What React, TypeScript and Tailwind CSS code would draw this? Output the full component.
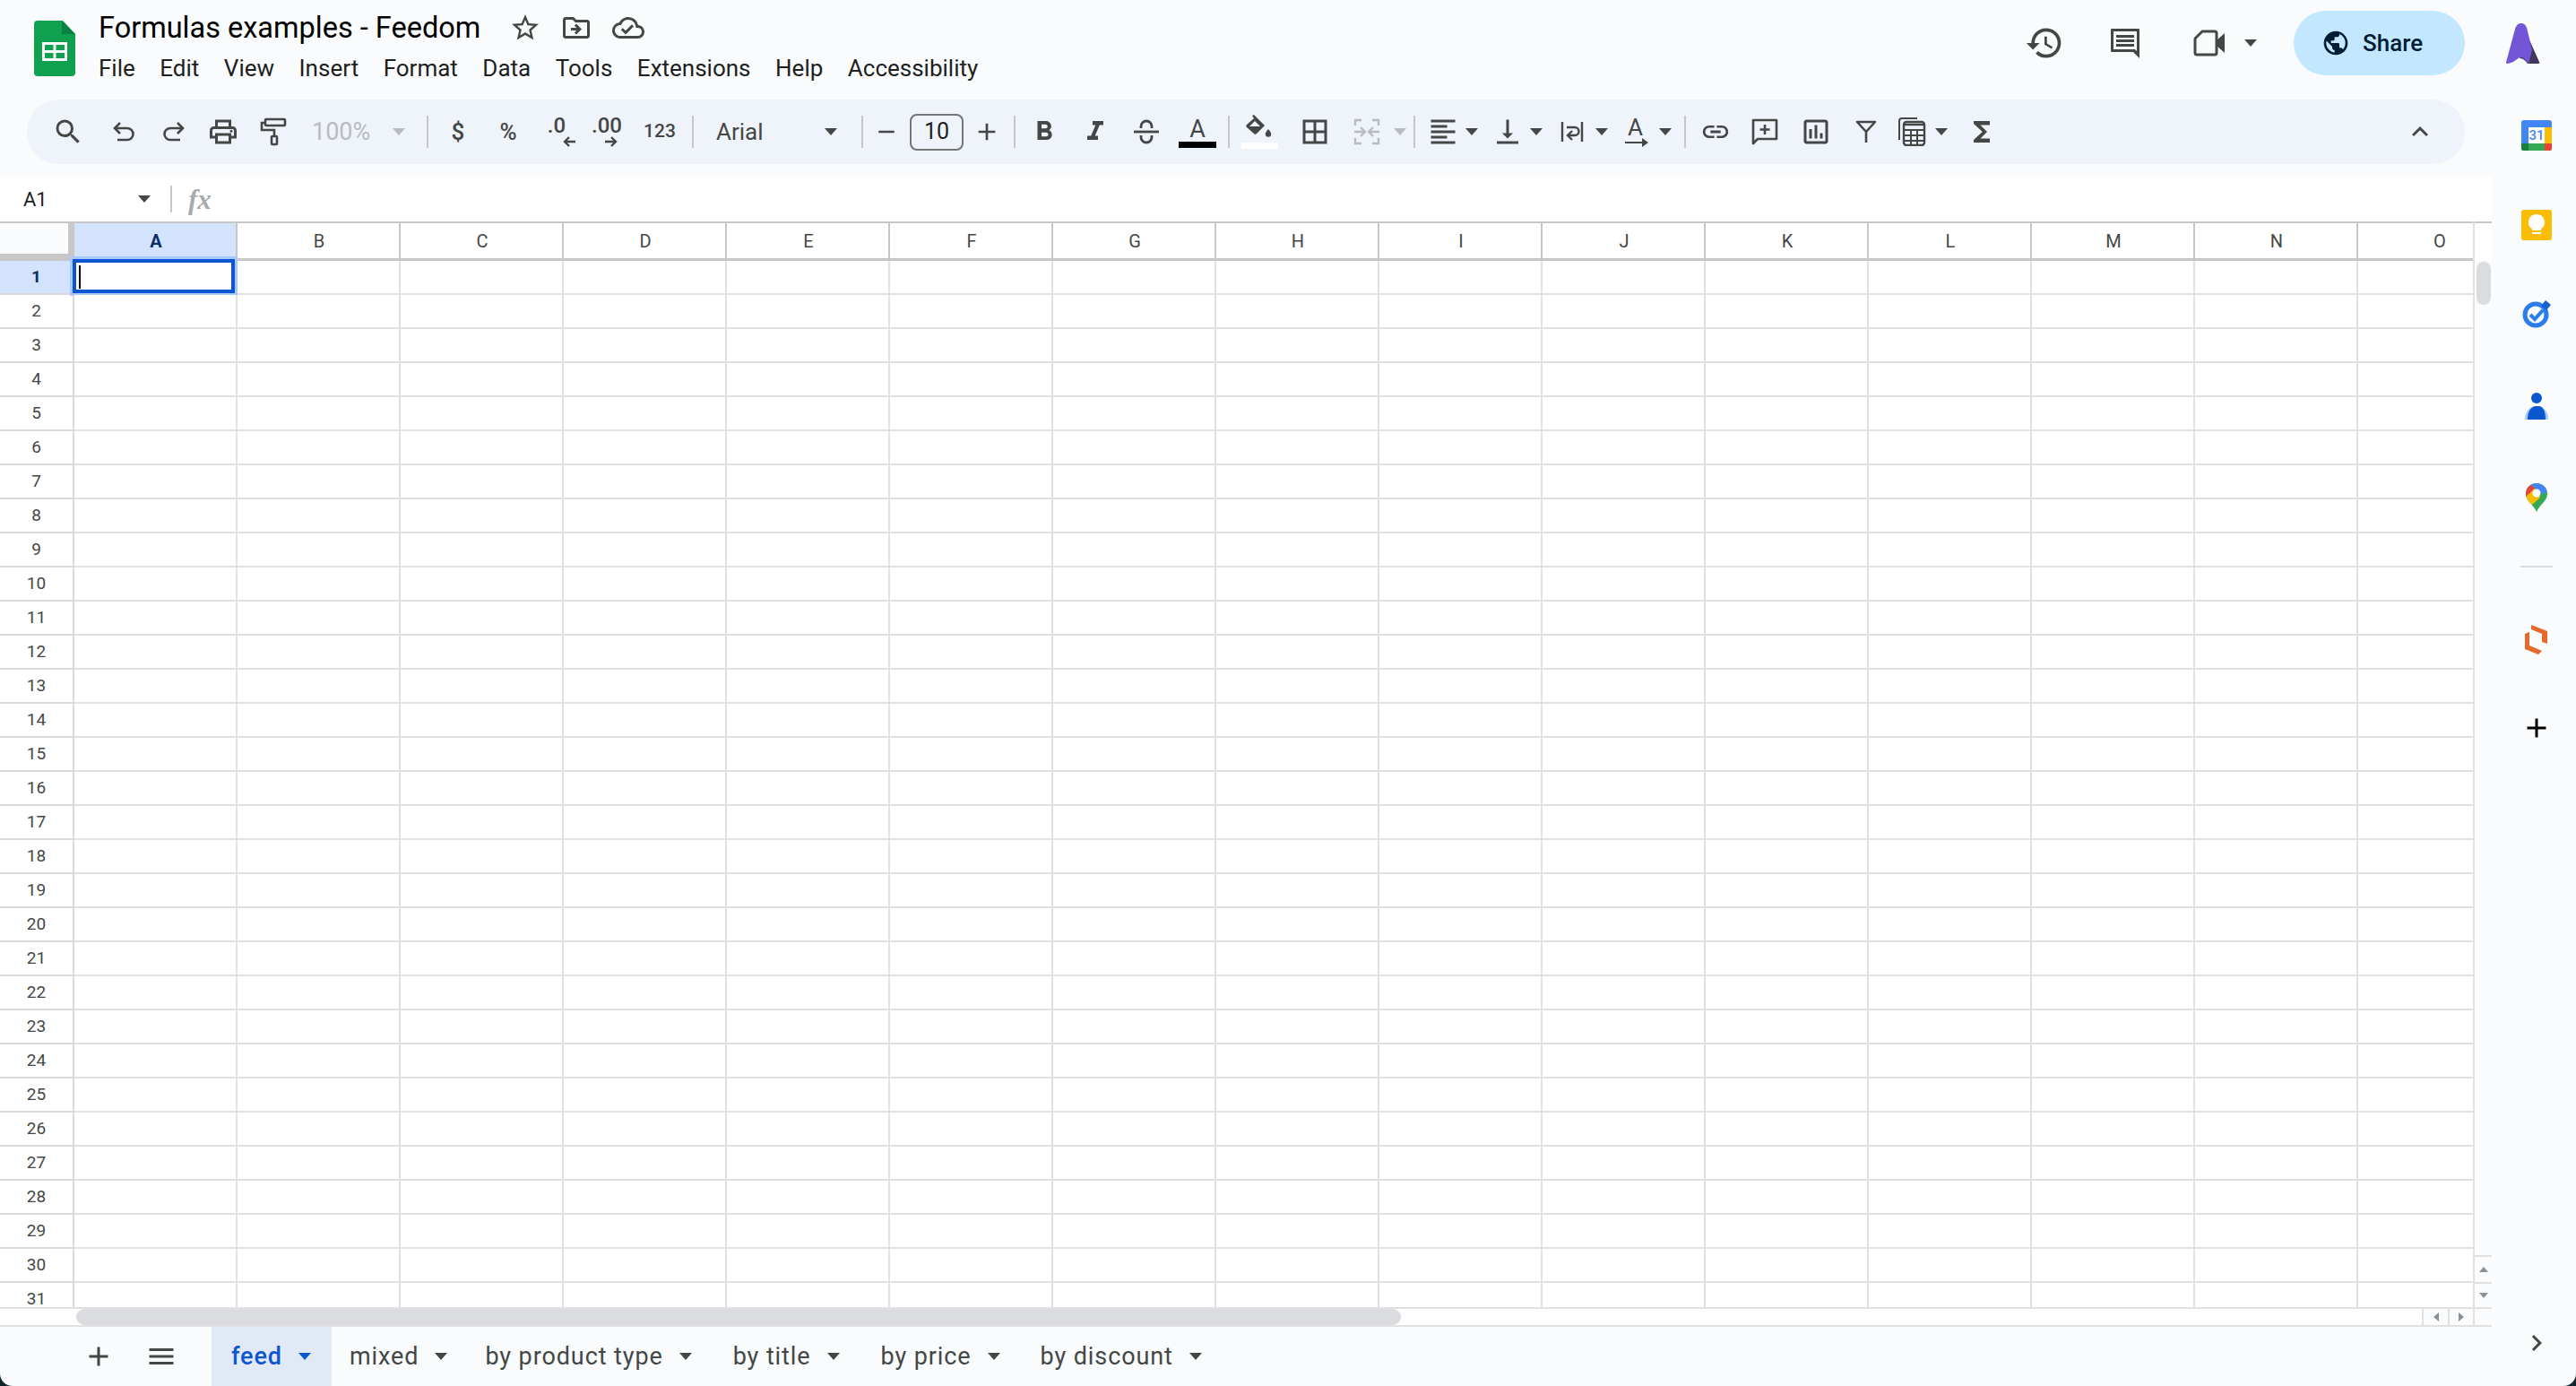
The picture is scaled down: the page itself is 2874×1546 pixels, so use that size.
import React from 'react';
import {
  MdSearch, MdOutlinePrint, MdFormatBold, MdFormatItalic,
  MdBorderAll, MdFormatAlignLeft, MdVerticalAlignBottom, MdLink,
  MdOutlineInsertChart, MdFunctions, MdHistory, MdPublic, MdStarBorder, MdOutlineDriveFileMove,
  MdOutlineCloudDone, MdAdd, MdMenu, MdExpandLess, MdChevronRight, MdRemove,
} from 'react-icons/md';

const COLS = ['A', 'B', 'C', 'D', 'E', 'F', 'G', 'H', 'I', 'J', 'K', 'L', 'M', 'N', 'O'];
const ROWS = Array.from({ length: 31 }, (_, i) => i + 1);
const MENU = ['File', 'Edit', 'View', 'Insert', 'Format', 'Data', 'Tools', 'Extensions', 'Help', 'Accessibility'];
const TABS = [
  { name: 'mixed', cls: 'pl-[20px] pr-[21px]' },
  { name: 'by product type', cls: 'pl-[21px] pr-[24px]' },
  { name: 'by title', cls: 'pl-[22px] pr-[24px]' },
  { name: 'by price', cls: 'pl-[22px] pr-[23px]' },
  { name: 'by discount', cls: 'pl-[22px] pr-[21px]' },
];

const Caret: React.FC<{ className?: string }> = ({ className = 'text-[#444746]' }) => (
  <svg width="14" height="8" viewBox="0 0 14 8" className={`shrink-0 ${className}`}>
    <path d="M0 0h14L7 8z" fill="currentColor" />
  </svg>
);

const Sep: React.FC<{ className?: string }> = ({ className = '' }) => (
  <div className={`h-[36px] w-[2px] shrink-0 bg-[#c7c7c7] ${className}`} />
);

const Btn: React.FC<{ className: string; children: React.ReactNode }> = ({ className, children }) => (
  <div className={`flex h-full shrink-0 items-center justify-center text-[#444746] ${className}`}>{children}</div>
);

const CaretBox: React.FC<{ className?: string; muted?: boolean }> = ({ className = '', muted }) => (
  <div className={`flex h-full w-[14px] shrink-0 items-center justify-center ${className}`}>
    <Caret className={muted ? 'text-[#b9bcbf]' : 'text-[#444746]'} />
  </div>
);

const UndoIcon = () => (
  <svg width="26" height="24" viewBox="0 0 26 24" fill="none" stroke="currentColor" strokeWidth="2.6">
    <path d="M9 2L3 8l6 6" />
    <path d="M3 8h14a6.500 6.500 0 0 1 0 13H6" />
  </svg>
);

const RedoIcon = () => (
  <svg width="26" height="24" viewBox="0 0 26 24" fill="none" stroke="currentColor" strokeWidth="2.6">
    <path d="M17 2l6 6-6 6" />
    <path d="M23 8H9a6.500 6.500 0 0 0 0 13h11" />
  </svg>
);

const PaintIcon = () => (
  <svg width="34" height="34" viewBox="0 0 34 34" fill="none" stroke="currentColor" strokeWidth="2.6">
    <rect x="7" y="3" width="22" height="7" rx="1" />
    <path d="M7 7H3v8h14v7" />
    <rect x="14" y="22" width="6" height="9" rx="1" />
  </svg>
);

const StrikeIcon = () => (
  <svg width="32" height="32" viewBox="0 0 32 32" fill="none" stroke="currentColor" strokeWidth="2.8">
    <path d="M10 12V10a6 6 0 0 1 12 0v2" />
    <path d="M2 16h28" />
    <path d="M10 20v2a6 6 0 0 0 12 0v-2" />
  </svg>
);

const FillIcon = () => (
  <svg width="34" height="30" viewBox="0 0 34 30" fill="currentColor">
    <path d="M9 1l2-1 12 12-9 9a2 2 0 0 1-3 0L3 14a2 2 0 0 1 0-3l8-7zm3 6l-6 6 h12z" fillRule="evenodd" />
    <path d="M27 16s3.2 3.4 3.2 5.6a3.2 3.2 0 0 1-6.4 0C23.800 19.400 27 16 27 16z" />
  </svg>
);

const MergeIcon = () => (
  <svg width="32" height="30" viewBox="0 0 32 30" fill="none" stroke="currentColor" strokeWidth="2.4">
    <path d="M10 2H3v6M10 28H3v-6M22 2h7v6M22 28h7v-6" />
    <path d="M2 15h11M9 10l5 5-5 5M30 15H19M23 10l-5 5 5 5" />
  </svg>
);

const WrapIcon = () => (
  <svg width="26" height="26" viewBox="0 0 26 26" fill="none" stroke="currentColor" strokeWidth="2.4">
    <path d="M2 2v22M24 2v22" />
    <path d="M7 8h9a4 4 0 0 1 0 9h-7M13 12l-5 5 5 5" />
  </svg>
);

const RotateBlock = () => (
  <div className="flex flex-col items-start">
    <span className="ml-[3px] text-[26px] leading-[24px]">A</span>
    <svg width="26" height="10" viewBox="0 0 26 10" fill="currentColor">
      <path d="M0 4h19V0l7 5-7 5V6H0z" />
    </svg>
  </div>
);

const AddCommentIcon = () => (
  <svg width="30" height="30" viewBox="0 0 30 30" fill="none" stroke="currentColor" strokeWidth="2.6">
    <path d="M2 2h26v21H7l-5 5z" strokeLinejoin="round" />
    <path d="M15 7v11M9.500 12.500h11" />
  </svg>
);

const FilterIcon = () => (
  <svg width="24" height="26" viewBox="0 0 24 26" fill="none" stroke="currentColor" strokeWidth="2.6" strokeLinejoin="round">
    <path d="M2 2h20l-10 11zM12 12v13" />
  </svg>
);

const FunctionsIcon = () => (
  <svg width="32" height="32" viewBox="0 0 32 32" fill="none" stroke="currentColor" strokeWidth="2.4">
    <path d="M22 1H5a3 3 0 0 0-3 3v21" strokeWidth="2" />
    <rect x="7" y="5" width="23" height="26" rx="3" />
    <path d="M7 14h23M7 20h23M7 26h23M15 14v17M22 14v17" strokeWidth="2" />
    <path d="M8 8h21" />
  </svg>
);

const CommentsIcon = () => (
  <svg width="36" height="36" viewBox="0 0 36 36" fill="currentColor">
    <path d="M3 2h30a1 1 0 0 1 1 1v32l-7-7H3a1 1 0 0 1-1-1V3a1 1 0 0 1 1-1zm2 3v20h24l2 2V5z" fillRule="evenodd" />
    <path d="M8 9h20v3H8zM8 14h20v3H8zM8 19h20v3H8z" />
  </svg>
);

const VideoIcon = () => (
  <svg width="36" height="30" viewBox="0 0 36 30" fill="none">
    <path d="M10 2h14a2 2 0 0 1 2 2v22a2 2 0 0 1-2 2H4a2 2 0 0 1-2-2V10z" stroke="#444746" strokeWidth="3" strokeLinejoin="round" />
    <path d="M26 12l9-8v22l-9-8z" fill="#444746" />
  </svg>
);

const SheetsLogo = () => (
  <svg width="46" height="62" viewBox="0 0 46 62">
    <path d="M4 0h28l14 15v43a4 4 0 0 1-4 4H4a4 4 0 0 1-4-4V4a4 4 0 0 1 4-4z" fill="#0fa14f" />
    <path d="M31 0l15 15H31z" fill="#0b8043" />
    <path d="M9 24h28v21H9zm3 3v6h9.500v-6zm12.500 0v6H34v-6zM12 36v6h9.500v-6zm12.500 0v6H34v-6z" fill="#fff" fillRule="evenodd" />
  </svg>
);

const AvatarLogo = () => (
  <svg width="38" height="46" viewBox="0 0 38 46">
    <path d="M24 14l13 29c.6 1.500 0 2-1.500 2H24c-2-3-5-6-9-6z" fill="#43365f" />
    <path d="M17 0c3.500 0 5.500 2.500 6.500 6.500L29 30l-4 15c-3-5-7-8-10-7-4 3-9 7-14 7-.8 0-1.200-.6-1-1.500L10 6.500C11 2.500 13.500 0 17 0z" fill="#7356d8" />
  </svg>
);

const CalendarIcon = () => (
  <div className="relative h-[34px] w-[34px] overflow-hidden rounded-[3px] bg-[#4285f4]">
    <div className="absolute right-0 top-[8px] h-[18px] w-[8px] bg-[#fbbc04]" />
    <div className="absolute bottom-0 left-0 h-[8px] w-full bg-[#34a853]" />
    <div className="absolute bottom-0 left-0 h-[8px] w-[8px] bg-[#188038]" />
    <div className="absolute bottom-0 right-0 h-[8px] w-[8px] bg-[#ea4335]" />
    <div className="absolute left-[8px] top-[8px] flex h-[18px] w-[18px] items-center justify-center bg-white text-[15px] font-medium leading-none text-[#4285f4]">31</div>
  </div>
);

const KeepIcon = () => (
  <div className="flex h-[34px] w-[34px] items-center justify-center rounded-[3px] bg-[#fbbc04]">
    <svg width="18" height="24" viewBox="0 0 18 24" fill="#fff">
      <path d="M9 0a9 9 0 0 1 5 16.500V18H4v-1.500A9 9 0 0 1 9 0zM4 20h10v2H4z" />
    </svg>
  </div>
);

const TasksIcon = () => (
  <svg width="32" height="32" viewBox="0 0 32 32">
    <circle cx="15" cy="17" r="12" fill="none" stroke="#2b7de9" strokeWidth="5" />
    <path d="M9 17l5 5 9-10" fill="none" stroke="#2b7de9" strokeWidth="4" />
    <path d="M21 7l5-6 6 5-5 6z" fill="#1a5fd0" />
  </svg>
);

const ContactsIcon = () => (
  <svg width="26" height="30" viewBox="0 0 26 30">
    <circle cx="13" cy="6" r="6" fill="#0b57d0" />
    <path d="M0 30c0-8 5-15 12-15h2c7 0 12 6 12 15z" fill="#a8c7fa" />
    <path d="M3 30c0-8 3-15 10-15h2c6 0 8 7 8 15z" fill="#0b57d0" />
  </svg>
);

const MapsIcon = () => (
  <svg width="24" height="32" viewBox="0 0 24 32">
    <defs>
      <clipPath id="pin">
        <path d="M12 0A12 12 0 0 0 0 12c0 8 9 12 12 20 3-8 12-12 12-20A12 12 0 0 0 12 0z" />
      </clipPath>
    </defs>
    <g clipPath="url(#pin)">
      <rect width="24" height="32" fill="#34a853" />
      <path d="M0 0h24v10l-7 2-8-8-9 9z" fill="#4285f4" />
      <path d="M0 4l4-4 6 6-10 9z" fill="#ea4335" />
      <path d="M0 15l10-9 6 10-9 8-7-4z" fill="#fbbc04" />
    </g>
    <circle cx="12" cy="11" r="4.500" fill="#fff" />
  </svg>
);

const OrangeIcon = () => (
  <svg width="28" height="34" viewBox="0 0 28 34" fill="#e8672a">
    <path d="M8 0l18 7v14l-6-2V10L8 5zM1 10l5-2v15l14 6-4 4-15-6z" />
  </svg>
);

const App: React.FC = () => {
  return (
    <div className="relative flex h-[1546px] w-[2874px] overflow-hidden bg-[#f9fbfd] font-['Roboto',sans-serif]">
      <main className="flex min-w-0 flex-1 flex-col">
        {/* title bar */}
        <header className="flex h-[111px] shrink-0 pl-[38px] pr-[30px]">
          <div className="mt-[23px] shrink-0"><SheetsLogo /></div>
          <div className="ml-[26px] mt-[9px]">
            <div className="flex items-center">
              <span className="text-[32.500px] leading-[44px] text-black">Formulas examples - Feedom</span>
              <span className="ml-[32px] text-[#444746]"><MdStarBorder size={36} /></span>
              <span className="ml-[21px] text-[#444746]"><MdOutlineDriveFileMove size={36} /></span>
              <span className="ml-[22px] text-[#444746]"><MdOutlineCloudDone size={36} /></span>
            </div>
            <nav className="mt-[7px] flex gap-[27.500px] text-[26px] leading-[32px] text-[#1f1f1f]">
              {MENU.map((item) => <span key={item}>{item}</span>)}
            </nav>
          </div>
          <div className="ml-auto flex h-[96px] items-center">
            <span className="text-[#444746]"><MdHistory size={44} /></span>
            <span className="ml-[50px] text-[#444746]"><CommentsIcon /></span>
            <span className="ml-[58px]"><VideoIcon /></span>
            <Caret className="ml-[21px] text-[#444746]" />
            <div className="ml-[41px] flex h-[72px] w-[191px] items-center rounded-full bg-[#c2e7ff] pl-[31px] text-[26px] font-medium text-[#001d35]">
              <MdPublic size={32} />
              <span className="ml-[14px]">Share</span>
            </div>
          </div>
        </header>

        {/* toolbar */}
        <div className="ml-[30px] mr-[30px] flex h-[72px] shrink-0 items-center rounded-full bg-[#eff3fa] pl-[18px] pr-[30px]">
          <Btn className="w-[56px]"><MdSearch size={36} /></Btn>
          <Btn className="ml-[6px] w-[56px]"><UndoIcon /></Btn>
          <Btn className="w-[55px]"><RedoIcon /></Btn>
          <Btn className="w-[56px]"><MdOutlinePrint size={36} /></Btn>
          <Btn className="w-[58px]"><PaintIcon /></Btn>
          <div className="flex h-full w-[133px] shrink-0 items-center pl-[13px] text-[27px] text-[#b9bcbf]">
            <span>100%</span>
            <Caret className="ml-[25px] text-[#b9bcbf]" />
          </div>
          <Sep className="ml-[8px]" />
          <Btn className="ml-[5px] w-[56px] text-[26px] font-medium">$</Btn>
          <Btn className="w-[56px] text-[26px] font-medium">%</Btn>
          <Btn className="ml-[5px] w-[56px] flex-col text-[24px] font-medium leading-[22px]">
            <span className="mr-[14px]">.0</span>
            <svg width="36" height="14" viewBox="0 0 36 14" fill="none" stroke="currentColor" strokeWidth="2.4"><path d="M32 7H20M25 2l-5 5 5 5" /></svg>
          </Btn>
          <Btn className="w-[46px] flex-col text-[24px] font-medium leading-[22px]">
            <span className="mr-[4px]">.00</span>
            <svg width="36" height="14" viewBox="0 0 36 14" fill="none" stroke="currentColor" strokeWidth="2.4"><path d="M14 7h12M21 2l5 5-5 5" /></svg>
          </Btn>
          <Btn className="w-[68px] text-[21px] font-medium">123</Btn>
          <Sep className="ml-[2px]" />
          <div className="flex h-full w-[185px] shrink-0 items-center pl-[25px] text-[26px] text-[#444746]">
            <span className="w-[121px]">Arial</span>
            <Caret />
          </div>
          <Sep className="ml-[2px]" />
          <Btn className="w-[52px]"><MdRemove size={30} /></Btn>
          <div className="flex h-[41px] w-[60px] shrink-0 items-center justify-center rounded-[8px] border-2 border-[#747775] text-[25px] text-[#1f1f1f]">10</div>
          <Btn className="w-[52px]"><MdAdd size={32} /></Btn>
          <Sep className="ml-[4px]" />
          <Btn className="w-[64px]"><MdFormatBold size={36} /></Btn>
          <Btn className="w-[50px]"><MdFormatItalic size={36} /></Btn>
          <Btn className="w-[64px]"><StrikeIcon /></Btn>
          <Btn className="w-[50px]">
            <div className="flex flex-col items-center">
              <span className="text-[27px] leading-[28px]">A</span>
              <div className="h-[7px] w-[42px] bg-black" />
            </div>
          </Btn>
          <Sep className="ml-[9px]" />
          <Btn className="w-[66px]">
            <div className="flex flex-col items-center">
              <FillIcon />
              <div className="mt-[1px] h-[7px] w-[41px] bg-white" />
            </div>
          </Btn>
          <Btn className="w-[58px]"><MdBorderAll size={36} /></Btn>
          <Btn className="w-[58px] text-[#b9bcbf]"><MergeIcon /></Btn>
          <CaretBox className="ml-[1px]" muted />
          <Sep className="ml-[8px]" />
          <Btn className="ml-[6px] w-[50px]"><MdFormatAlignLeft size={36} /></Btn>
          <CaretBox />
          <Btn className="ml-[8px] w-[50px]"><MdVerticalAlignBottom size={36} /></Btn>
          <CaretBox />
          <Btn className="ml-[8px] w-[50px]"><WrapIcon /></Btn>
          <CaretBox className="ml-[1px]" />
          <Btn className="ml-[7px] w-[50px]"><RotateBlock /></Btn>
          <CaretBox />
          <Sep className="ml-[14px]" />
          <Btn className="w-[66px]"><MdLink size={34} /></Btn>
          <Btn className="w-[44px]"><AddCommentIcon /></Btn>
          <Btn className="w-[70px]"><MdOutlineInsertChart size={36} /></Btn>
          <Btn className="w-[42px]"><FilterIcon /></Btn>
          <Btn className="ml-[4px] w-[52px]"><FunctionsIcon /></Btn>
          <CaretBox />
          <Btn className="ml-[18px] w-[40px]"><MdFunctions size={36} /></Btn>
          <Btn className="ml-auto w-[40px]"><MdExpandLess size={36} /></Btn>
        </div>

        {/* formula bar */}
        <div className="mt-[14px] flex h-[50px] shrink-0 items-center bg-white pl-[26px]">
          <span className="w-[128px] text-[22px] text-[#1f1f1f]">A1</span>
          <Caret />
          <div className="ml-[22px] h-[30px] w-[2px] bg-[#c7c7c7]" />
          <span className="ml-[18px] font-['Liberation_Serif',serif] text-[31px] font-bold italic leading-none text-[#a8abad]">fx</span>
        </div>

        {/* sheet */}
        <div className="flex min-h-0 flex-1">
          <div className="min-w-0 flex-1 overflow-hidden bg-white">
            <div className="flex h-[44px] border-t-2 border-[#c7c7c7]">
              <div className="h-full w-[83px] shrink-0 border-b-[8px] border-r-[7px] border-[#c7c7c7] bg-[#f9fbfd]" />
              {COLS.map((col, i) => (
                <div
                  key={col}
                  className={`flex h-full w-[182px] shrink-0 items-center justify-center border-b-[3px] border-r-2 border-[#c7c7c7] pl-[2px] text-[20px] ${
                    i === 0 ? 'bg-[#d3e3fd] font-bold text-[#0b2d6b]' : 'bg-white text-[#444746]'
                  }`}
                >
                  {col}
                </div>
              ))}
            </div>
            {ROWS.map((row) => (
              <div key={row} className="flex h-[38px]">
                <div
                  className={`flex h-full w-[83px] shrink-0 items-center justify-center border-b-2 border-r-2 border-[#d9d9d9] text-[19px] ${
                    row === 1 ? 'bg-[#d3e3fd] font-bold text-[#0b2d6b]' : 'bg-white text-[#444746]'
                  }`}
                >
                  {row}
                </div>
                {COLS.map((col, i) => (
                  <div key={col} className="relative h-full w-[182px] shrink-0 border-b-2 border-r-2 border-[#e1e1e1] bg-white">
                    {row === 1 && i === 0 && (
                      <div className="absolute -bottom-[3px] -left-[5px] -right-[2px] -top-[5px] border-[3px] border-[#a8c7fa]">
                        <div className="h-full w-full border-[4px] border-[#0b57d0] bg-white pl-[3px] pt-[3px]">
                          <div className="h-[26px] w-[2px] bg-black" />
                        </div>
                      </div>
                    )}
                  </div>
                ))}
              </div>
            ))}
          </div>

          {/* vertical scrollbar */}
          <div className="flex w-[21px] shrink-0 flex-col border-l-2 border-[#e1e1e1] bg-[#f9fbfd]">
            <div className="h-[44px] border-t-2 border-[#c7c7c7] bg-white" />
            <div className="mx-auto mt-[1px] h-[48px] w-[16px] rounded-full bg-[#dadce0]" />
            <div className="mt-auto flex h-[30px] items-center justify-center border-t-2 border-[#e1e1e1]">
              <svg width="10" height="6" viewBox="0 0 10 6"><path d="M5 0l5 6H0z" fill="#8e9194" /></svg>
            </div>
            <div className="flex h-[28px] items-center justify-center border-t-2 border-[#e1e1e1]">
              <svg width="10" height="6" viewBox="0 0 10 6"><path d="M0 0h10L5 6z" fill="#8e9194" /></svg>
            </div>
          </div>
        </div>

        {/* horizontal scrollbar */}
        <div className="flex h-[22px] shrink-0 border-b-2 border-t-2 border-[#e1e1e1] bg-white pl-[85px]">
          <div className="h-full w-[1478px] rounded-full bg-[#dadce0]" />
          <div className="ml-auto flex h-full w-[78px] bg-[#f9fbfd]">
            <div className="flex w-[29px] items-center justify-center border-l-2 border-[#e1e1e1]">
              <svg width="6" height="10" viewBox="0 0 6 10"><path d="M6 0v10L0 5z" fill="#8e9194" /></svg>
            </div>
            <div className="flex w-[28px] items-center justify-center border-l-2 border-[#e1e1e1]">
              <svg width="6" height="10" viewBox="0 0 6 10"><path d="M0 0v10l6-5z" fill="#8e9194" /></svg>
            </div>
            <div className="flex-1 border-l-2 border-[#e1e1e1]" />
          </div>
        </div>

        {/* sheet tabs */}
        <div className="flex h-[66px] shrink-0 items-center text-[27px] font-[450] tracking-[0.9px] text-[#444746]">
          <span className="ml-[92px]"><MdAdd size={36} /></span>
          <span className="ml-[34px]"><MdMenu size={36} /></span>
          <div className="ml-[38px] flex h-full items-center bg-[#e1e9f7] pl-[22px] pr-[23px] font-medium text-[#0b57d0]">
            <span>feed</span>
            <Caret className="ml-[18px] text-[#0b57d0]" />
          </div>
          {TABS.map((tab) => (
            <div key={tab.name} className={`flex h-full items-center ${tab.cls}`}>
              <span>{tab.name}</span>
              <Caret className="ml-[18px] text-[#444746]" />
            </div>
          ))}
        </div>
      </main>

      {/* side panel */}
      <aside className="flex w-[94px] shrink-0 flex-col items-center pl-[6px]">
        <div className="mt-[26px] mr-[30px]"><AvatarLogo /></div>
        <div className="mt-[62px]"><CalendarIcon /></div>
        <div className="mt-[66px]"><KeepIcon /></div>
        <div className="mt-[66px]"><TasksIcon /></div>
        <div className="mt-[72px]"><ContactsIcon /></div>
        <div className="mt-[71px]"><MapsIcon /></div>
        <div className="mt-[60px] h-[2px] w-[36px] bg-[#dadce0]" />
        <div className="mt-[64px]"><OrangeIcon /></div>
        <div className="mt-[63px] text-black"><MdAdd size={36} /></div>
        <div className="mb-[30px] mt-auto text-[#444746]"><MdChevronRight size={36} /></div>
      </aside>

      {/* window corners */}
      <svg width="14" height="14" viewBox="0 0 14 14" className="absolute bottom-0 left-0"><path d="M0 0v14h14A14 14 0 0 1 0 0z" fill="#10252b" /></svg>
      <svg width="14" height="14" viewBox="0 0 14 14" className="absolute bottom-0 right-0"><path d="M14 0v14H0A14 14 0 0 0 14 0z" fill="#10252b" /></svg>
    </div>
  );
};

export default App;
